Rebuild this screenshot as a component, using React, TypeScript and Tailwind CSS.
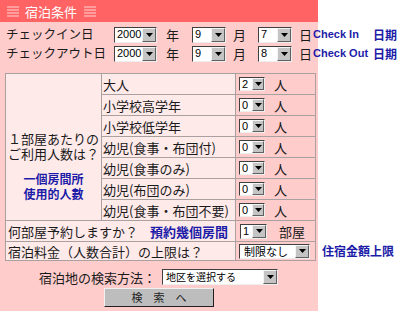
import React from 'react';

const jp = "font-['Noto_Sans_CJK_JP','Noto_Sans_CJK_SC',sans-serif]";
const blue = 'text-[#1c1ca8] font-bold';

const Arrow = () => (
  <svg width="7" height="4" viewBox="0 0 7 4">
    <path d="M0 0h7L3.5 4z" fill="#000" />
  </svg>
);

type SelProps = { value: string; box: string; text?: string; btn?: string };

const Select = ({ value, box, text = "text-[11px] font-['Liberation_Sans',sans-serif]", btn = 'w-[14px]' }: SelProps) => (
  <div className={`flex shrink-0 bg-white border border-t-[#404040] border-l-[#404040] border-b-[#eeeeee] border-r-[#eeeeee] ${box}`}>
    <span className={`flex-1 min-w-0 flex items-center pl-[2px] leading-none text-black whitespace-nowrap ${text}`}>{value}</span>
    <span className={`${btn} shrink-0 flex items-center justify-center bg-[#c4c4c4] border border-t-[#f4f4f4] border-l-[#f4f4f4] border-b-[#606060] border-r-[#606060]`}>
      <Arrow />
    </span>
  </div>
);

const Lines = () => (
  <svg width="12" height="11" viewBox="0 0 12 11">
    {[1, 4, 7, 10].map((y) => (
      <rect key={y} x="0" y={y - 0.5} width="12" height="1" fill="#ffd6d6" />
    ))}
  </svg>
);

const DateRow = ({ label, day, en }: { label: string; day: string; en: string }) => (
  <div className="flex items-center w-[400px] h-[17px] whitespace-nowrap text-[13px] leading-none">
    <span className="w-[114px] shrink-0 pl-[6px] text-[12.5px]">{label}</span>
    <Select value="2000" box="w-[43px] h-[16px]" />
    <span className="ml-[9px] shrink-0">年</span>
    <Select value="9" box="ml-[13px] w-[34px] h-[16px]" />
    <span className="ml-[7px] shrink-0">月</span>
    <Select value={day} box="ml-[12px] w-[34px] h-[16px]" />
    <span className="ml-[7px] shrink-0">日</span>
    <span className={`ml-[1px] shrink-0 flex items-center ${blue}`}>
      <span className="w-[60px] shrink-0 text-[11px] font-['Liberation_Sans',sans-serif]">{en}</span>
      <span className="text-[12px]">日期</span>
    </span>
  </div>
);

const people = [
  ['大人', '2'],
  ['小学校高学年', '0'],
  ['小学校低学年', '0'],
  ['幼児(食事・布団付)', '0'],
  ['幼児(食事のみ)', '0'],
  ['幼児(布団のみ)', '0'],
  ['幼児(食事・布団不要)', '0'],
];

export default function App() {
  return (
    <div className={`w-[400px] h-[315px] bg-white overflow-hidden text-[#1a1a1a] ${jp}`}>
      <div className="w-[318px] h-[311px] bg-[#ffcccc]">
        {/* title */}
        <div className="h-[22px] bg-[#ff6363] flex items-center pl-[7px] text-white text-[13px] leading-none">
          <Lines />
          <span className="ml-[6px]">宿泊条件</span>
          <span className="ml-[7px] flex"><Lines /></span>
        </div>

        <div className="pt-[4px] flex flex-col gap-[2px]">
          <DateRow label="チェックイン日" day="7" en="Check In" />
          <DateRow label="チェックアウト日" day="8" en="Check Out" />
        </div>

        {/* people table */}
        <div className="ml-[5px] mt-[11px] w-[311px] grid grid-cols-[95px_133px_79px] grid-rows-[repeat(8,20px)_18px] gap-px p-px bg-[#aaa0a0] text-[13px] leading-none">
          <div className="row-span-7 bg-[#ffeaea] flex flex-col items-center pt-[57px]">
            <div className="leading-[15px] text-center whitespace-nowrap">
              <div>１部屋あたりの</div>
              <div>ご利用人数は？</div>
            </div>
            <div className={`mt-[10px] leading-[15px] text-[12px] text-center ${blue}`}>
              <div>一個房間所</div>
              <div>使用的人數</div>
            </div>
          </div>
          {people.map(([label, v]) => (
            <React.Fragment key={label}>
              <div className="bg-[#ffeaea] flex items-center pl-[1px] whitespace-nowrap">{label}</div>
              <div className="bg-[#ffcccc] flex items-center pl-[3px]">
                <Select value={v} box="w-[26px] h-[14px]" btn="w-[12px]" />
                <span className="ml-[9px]">人</span>
              </div>
            </React.Fragment>
          ))}
          <div className="col-span-2 bg-[#ffeaea] flex items-center pl-[2px] whitespace-nowrap">
            <span>何部屋予約しますか？</span>
            <span className={`ml-[12px] text-[13px] ${blue}`}>預約幾個房間</span>
          </div>
          <div className="bg-[#ffcccc] flex items-center pl-[4px]">
            <Select value="1" box="w-[27px] h-[15px]" />
            <span className="ml-[12px]">部屋</span>
          </div>
          <div className="col-span-2 bg-[#ffeaea] flex items-center pl-[2px] whitespace-nowrap">
            宿泊料金（人数合計）の上限は？
          </div>
          <div className="bg-[#ffcccc] flex items-center pl-[3px] whitespace-nowrap">
            <Select value="制限なし" box="w-[71px] h-[15px]" text="text-[11px] pl-[4px]" />
            <span className={`ml-[12px] shrink-0 text-[12px] ${blue}`}>住宿金額上限</span>
          </div>
        </div>

        {/* search method */}
        <div className="mt-[8px] h-[16px] flex items-center pl-[39px] text-[13px] leading-none whitespace-nowrap">
          <span>宿泊地の検索方法：</span>
          <Select value="地区を選択する" box="ml-[6px] w-[116px] h-[16px]" text="text-[10px] pl-[3px]" />
        </div>

        <button className="mt-[3px] ml-[104px] w-[110px] h-[19px] flex items-center justify-center bg-[#bdbdbd] border border-t-[#f0f0f0] border-l-[#f0f0f0] border-b-[#202020] border-r-[#202020] text-[11px] leading-none text-[#222]">
          検　索　へ
        </button>
      </div>
    </div>
  );
}
